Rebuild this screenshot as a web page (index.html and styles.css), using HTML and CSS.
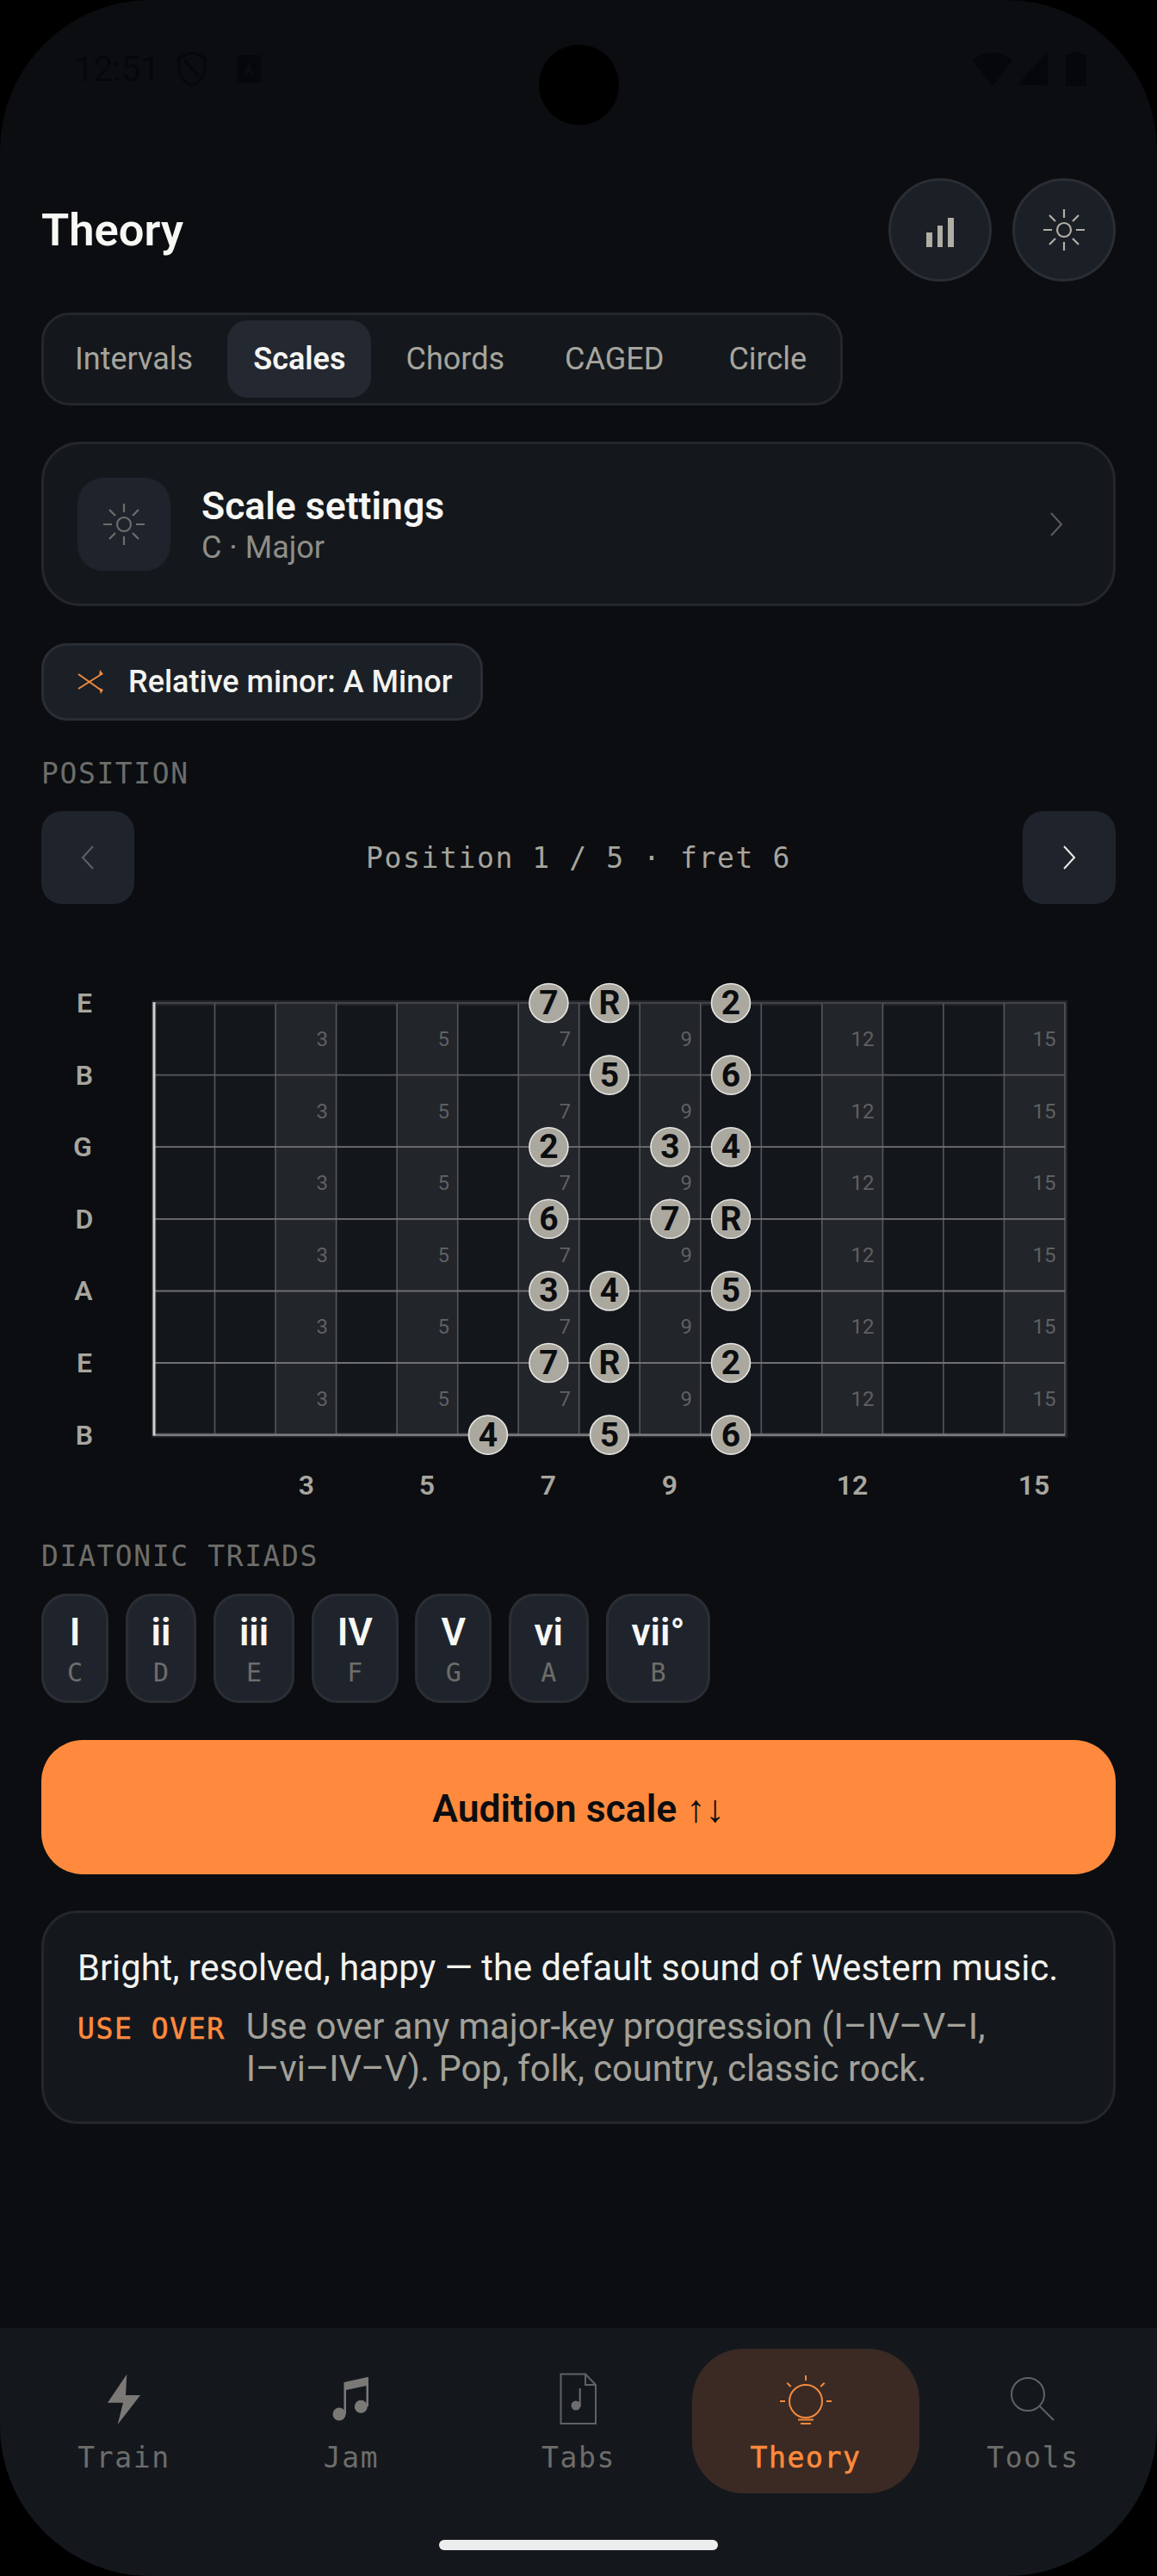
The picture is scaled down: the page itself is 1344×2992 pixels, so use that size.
FILE: index.html
```html
<!DOCTYPE html>
<html lang="en">
<head>
<meta charset="utf-8">
<title>Theory</title>
<link rel="stylesheet" href="styles.css">
</head>
<body>
<div class="screen">
  <div class="camera"></div>
  <div class="status">
    <div class="status-left">
      <span class="time">12:51</span>
      <svg class="st-shield" width="34" height="42" viewBox="0 0 34 42"><path d="M17 2 L32 8 V21 C32 30 25 37 17 40 C9 37 2 30 2 21 V8 Z M9 10 C9 18 24 22 24 30" fill="none" stroke="#06070a" stroke-width="3"/></svg>
      <svg class="st-a" width="28" height="32" viewBox="0 0 28 32"><path fill-rule="evenodd" d="M0 0H28V32H0Z M14 8 L8 24H12L14 19L16 24H20Z" fill="#06070a"/></svg>
    </div>
    <div class="status-right">
      <svg width="46" height="40" viewBox="0 0 46 40"><path d="M0 10 Q23 -8 46 10 L23 40 Z" fill="#06070a"/></svg>
      <svg width="36" height="38" viewBox="0 0 36 38"><path d="M36 0V38H0Z" fill="#06070a"/></svg>
      <svg class="st-batt" width="24" height="40" viewBox="0 0 24 40"><path d="M7 0H17V3H24V40H0V3H7Z" fill="#06070a"/></svg>
    </div>
  </div>

  <main class="content">
    <header class="head">
      <h1 class="title">Theory</h1>
      <div class="head-btns">
        <button class="round">
          <svg width="40" height="40" viewBox="0 0 40 40"><path d="M4 23h7v17H4z M17 15h6v25h-6z M29 6h7v34h-7z" fill="#b0aea5"/></svg>
        </button>
        <button class="round">
          <svg width="52" height="52" viewBox="-26 -26 52 52" class="sun"><circle r="8"/><path d="M0-24V-14M0 14V24M-24 0H-14M14 0H24M-17-17L-10-10M10 10L17 17M-17 17L-10 10M10-10L17-17"/></svg>
        </button>
      </div>
    </header>

    <nav class="tabs">
      <span class="tab">Intervals</span>
      <span class="tab active">Scales</span>
      <span class="tab">Chords</span>
      <span class="tab">CAGED</span>
      <span class="tab">Circle</span>
    </nav>

    <section class="settings">
      <div class="tile">
        <svg width="52" height="52" viewBox="-26 -26 52 52" class="sun dim"><circle r="8"/><path d="M0-24V-14M0 14V24M-24 0H-14M14 0H24M-17-17L-10-10M10 10L17 17M-17 17L-10 10M10-10L17-17"/></svg>
      </div>
      <div class="settings-text">
        <div class="settings-title">Scale settings</div>
        <div class="settings-sub">C · Major</div>
      </div>
      <svg class="chev-end" width="16" height="30" viewBox="0 0 16 30"><path d="M2 2L14 15L2 28" fill="none" stroke="#5a5c5e" stroke-width="2"/></svg>
    </section>

    <div class="chip">
      <svg width="32" height="28" viewBox="0 0 32 28"><path d="M1 5L28 24M1 22L28 5" fill="none" stroke="#f08a3e" stroke-width="2"/><path d="M26 0L30 5L25 7Z M25 21L30 23L27 28Z" fill="#f08a3e"/></svg>
      <span>Relative minor: A Minor</span>
    </div>

    <div class="label pos-label">POSITION</div>
    <div class="pos-row">
      <button class="square"><svg width="18" height="30" viewBox="0 0 18 30"><path d="M15 2L3 15L15 28" fill="none" stroke="#5d6064" stroke-width="2"/></svg></button>
      <span class="pos-text">Position 1 / 5 · fret 6</span>
      <button class="square"><svg width="18" height="30" viewBox="0 0 18 30"><path d="M3 2L15 15L3 28" fill="none" stroke="#ecece8" stroke-width="2"/></svg></button>
    </div>

    <svg class="board" width="1248" height="630" viewBox="48 1120 1248 630">
      <rect class="b-edge" x="179" y="1165" width="1058" height="501.6"/>
      <rect class="b-mark" x="320.1" y="1165" width="70.5" height="501.6"/>
      <rect class="b-mark" x="461.1" y="1165" width="70.6" height="501.6"/>
      <rect class="b-mark" x="602.2" y="1165" width="70.5" height="501.6"/>
      <rect class="b-mark" x="743.2" y="1165" width="70.6" height="501.6"/>
      <rect class="b-mark" x="954.8" y="1165" width="70.6" height="501.6"/>
      <rect class="b-mark" x="1166.4" y="1165" width="70.6" height="501.6"/>

      <path class="fret" d="M249.5 1165V1666.6M320.1 1165V1666.6M390.6 1165V1666.6M461.1 1165V1666.6M531.7 1165V1666.6M602.2 1165V1666.6M672.7 1165V1666.6M743.2 1165V1666.6M813.8 1165V1666.6M884.3 1165V1666.6M954.8 1165V1666.6M1025.4 1165V1666.6M1095.9 1165V1666.6M1166.4 1165V1666.6M1237 1165V1666.6"/>
      <path class="str s1" d="M179 1165H1237"/>
      <path class="str s2" d="M179 1248.6H1237"/>
      <path class="str s3" d="M179 1332.2H1237"/>
      <path class="str s3" d="M179 1415.8H1237"/>
      <path class="str s4" d="M179 1499.4H1237"/>
      <path class="str s4" d="M179 1583H1237"/>
      <path class="str s5" d="M179 1666.6H1237"/>
      <path class="nut" d="M179 1164V1667.5"/>

      <g class="inlay">
        <text x="381" y="1207">3</text><text x="381" y="1291">3</text><text x="381" y="1374">3</text><text x="381" y="1458">3</text><text x="381" y="1541">3</text><text x="381" y="1625">3</text>
        <text x="522" y="1207">5</text><text x="522" y="1291">5</text><text x="522" y="1374">5</text><text x="522" y="1458">5</text><text x="522" y="1541">5</text><text x="522" y="1625">5</text>
        <text x="663" y="1207">7</text><text x="663" y="1291">7</text><text x="663" y="1374">7</text><text x="663" y="1458">7</text><text x="663" y="1541">7</text><text x="663" y="1625">7</text>
        <text x="804" y="1207">9</text><text x="804" y="1291">9</text><text x="804" y="1374">9</text><text x="804" y="1458">9</text><text x="804" y="1541">9</text><text x="804" y="1625">9</text>
        <text x="1015.5" y="1207">12</text><text x="1015.5" y="1291">12</text><text x="1015.5" y="1374">12</text><text x="1015.5" y="1458">12</text><text x="1015.5" y="1541">12</text><text x="1015.5" y="1625">12</text>
        <text x="1226.5" y="1207">15</text><text x="1226.5" y="1291">15</text><text x="1226.5" y="1374">15</text><text x="1226.5" y="1458">15</text><text x="1226.5" y="1541">15</text><text x="1226.5" y="1625">15</text>
      </g>

      <g class="strname">
        <text x="98" y="1165">E</text><text x="98" y="1249">B</text><text x="96" y="1332">G</text><text x="98" y="1416">D</text><text x="97" y="1499">A</text><text x="98" y="1583">E</text><text x="98" y="1667">B</text>
      </g>

      <g class="fretnum">
        <text x="356" y="1725">3</text><text x="496" y="1725">5</text><text x="637" y="1725">7</text><text x="778" y="1725">9</text><text x="990" y="1725">12</text><text x="1201" y="1725">15</text>
      </g>

      <g class="note">
        <circle cx="637.4" cy="1165" r="22.5"/><text x="637.4" y="1165">7</text>
        <circle cx="708" cy="1165" r="22.5"/><text x="708" y="1165">R</text>
        <circle cx="849" cy="1165" r="22.5"/><text x="849" y="1165">2</text>
        <circle cx="708" cy="1248.6" r="22.5"/><text x="708" y="1248.6">5</text>
        <circle cx="849" cy="1248.6" r="22.5"/><text x="849" y="1248.6">6</text>
        <circle cx="637.4" cy="1332.2" r="22.5"/><text x="637.4" y="1332.2">2</text>
        <circle cx="778.5" cy="1332.2" r="22.5"/><text x="778.5" y="1332.2">3</text>
        <circle cx="849" cy="1332.2" r="22.5"/><text x="849" y="1332.2">4</text>
        <circle cx="637.4" cy="1415.8" r="22.5"/><text x="637.4" y="1415.8">6</text>
        <circle cx="778.5" cy="1415.8" r="22.5"/><text x="778.5" y="1415.8">7</text>
        <circle cx="849" cy="1415.8" r="22.5"/><text x="849" y="1415.8">R</text>
        <circle cx="637.4" cy="1499.4" r="22.5"/><text x="637.4" y="1499.4">3</text>
        <circle cx="708" cy="1499.4" r="22.5"/><text x="708" y="1499.4">4</text>
        <circle cx="849" cy="1499.4" r="22.5"/><text x="849" y="1499.4">5</text>
        <circle cx="637.4" cy="1583" r="22.5"/><text x="637.4" y="1583">7</text>
        <circle cx="708" cy="1583" r="22.5"/><text x="708" y="1583">R</text>
        <circle cx="849" cy="1583" r="22.5"/><text x="849" y="1583">2</text>
        <circle cx="566.9" cy="1666.6" r="22.5"/><text x="566.9" y="1666.6">4</text>
        <circle cx="708" cy="1666.6" r="22.5"/><text x="708" y="1666.6">5</text>
        <circle cx="849" cy="1666.6" r="22.5"/><text x="849" y="1666.6">6</text>
      </g>
    </svg>

    <div class="label triad-label">DIATONIC TRIADS</div>
    <div class="triads">
      <div class="triad"><b>I</b><span>C</span></div>
      <div class="triad"><b>ii</b><span>D</span></div>
      <div class="triad"><b>iii</b><span>E</span></div>
      <div class="triad"><b>IV</b><span>F</span></div>
      <div class="triad"><b>V</b><span>G</span></div>
      <div class="triad"><b>vi</b><span>A</span></div>
      <div class="triad"><b>vii°</b><span>B</span></div>
    </div>

    <button class="audition">Audition scale ↑↓</button>

    <section class="info">
      <p class="info-main">Bright, resolved, happy — the default sound of Western music.</p>
      <div class="info-row">
        <span class="use-over">USE OVER</span>
        <p class="info-sub">Use over any major-key progression (I–IV–V–I,<br>I–vi–IV–V). Pop, folk, country, classic rock.</p>
      </div>
    </section>
  </main>

  <footer class="bottom">
    <div class="items">
      <div class="item">
        <svg width="80" height="72" viewBox="104 2750 80 72"><path d="M147.3 2757.7L125 2790.7H143L136.7 2816L163 2782H146Z" fill="#7a7976"/></svg>
        <span>Train</span>
      </div>
      <div class="item">
        <svg width="80" height="72" viewBox="368 2750 80 72"><circle cx="394" cy="2804" r="7.5" fill="#7a7976"/><circle cx="419.3" cy="2795.3" r="7.5" fill="#7a7976"/><path d="M399.5 2804V2767L428 2760.7V2795H425.5V2771L402 2776V2804Z" fill="#7a7976"/></svg>
        <span>Jam</span>
      </div>
      <div class="item">
        <svg width="80" height="72" viewBox="632 2750 80 72"><path d="M651.5 2757.5H680L692 2770V2815H651.5Z M680 2757.5V2770H692" fill="none" stroke="#5f6265" stroke-width="2"/><path d="M673.7 2774V2795" stroke="#6c6d6c" stroke-width="2"/><circle cx="669" cy="2794" r="5.5" fill="#6c6d6c"/></svg>
        <span>Tabs</span>
      </div>
      <div class="item active">
        <svg width="80" height="72" viewBox="896 2750 80 72"><g fill="none" stroke="#f38a3e" stroke-width="2"><circle cx="936" cy="2789" r="19"/><path d="M936 2759V2765M914.3 2767.7L918.7 2772M957.7 2767.7L953.3 2772M906 2789H912M960 2789H966M927 2810.5H945M930 2815H942"/></g></svg>
        <span>Theory</span>
      </div>
      <div class="item">
        <svg width="80" height="72" viewBox="1160 2750 80 72"><circle cx="1194" cy="2781" r="19" fill="none" stroke="#5f6265" stroke-width="2"/><path d="M1208 2795L1224 2811" stroke="#5f6265" stroke-width="2"/></svg>
        <span>Tools</span>
      </div>
    </div>
    <div class="homebar"></div>
  </footer>
</div>
</body>
</html>
```

FILE: styles.css
```css
* { box-sizing: border-box; }
html, body { margin: 0; padding: 0; background: #000; }
body { width: 1344px; height: 2992px; overflow: hidden; font-family: Roboto, "Noto Sans", sans-serif; }
p, h1 { margin: 0; }
button { font: inherit; padding: 0; cursor: pointer; }

.screen {
  position: relative;
  width: 1344px;
  height: 2992px;
  background: #0b0d11;
  border-radius: 175px;
  overflow: hidden;
  display: flex;
  flex-direction: column;
}
.camera {
  position: absolute;
  left: 626px;
  top: 52px;
  width: 93px;
  height: 93px;
  border-radius: 50%;
  background: #000;
}
.status {
  height: 207px;
  flex: none;
  padding: 56px 82px 0 86px;
  display: flex;
  justify-content: space-between;
  align-items: flex-start;
  color: #06070a;
}
.status-left { display: flex; align-items: center; gap: 20px; height: 48px; }
.time { font-size: 41px; line-height: 48px; letter-spacing: -0.5px; }
.st-a { margin-left: 15px; }
.status-right { display: flex; align-items: center; gap: 5px; height: 48px; }
.st-batt { margin-left: 16px; }

.content { flex: 1; padding: 0 48px; display: flex; flex-direction: column; align-items: flex-start; }

.head { width: 100%; height: 120px; display: flex; justify-content: space-between; align-items: center; flex: none; }
.title { font-size: 52.5px; font-weight: 600; color: #f7f7f4; line-height: 64px; }
.head-btns { display: flex; gap: 24px; }
.round {
  width: 120px; height: 120px; border-radius: 50%;
  background: #1b1f26; border: 3px solid #2a2e34;
  display: flex; align-items: center; justify-content: center;
}
.sun { fill: none; stroke: #b0aea5; stroke-width: 2.2; }
.sun.dim { stroke: #6d6e6c; }

.tabs {
  margin-top: 36px;
  height: 108px;
  padding: 6px 9px 6px 6px;
  display: flex;
  gap: 10px;
  flex: none;
  background: #14181d;
  border: 3px solid #23272c;
  border-radius: 33px;
}
.tab {
  padding: 0 30px;
  height: 90px;
  line-height: 90px;
  font-size: 36px;
  color: #a7a59d;
  border-radius: 24px;
}
.tab:last-child { margin-left: 5px; }
.tab.active { background: #232831; color: #f5f5f2; font-weight: 600; }

.settings {
  margin-top: 42px;
  width: 100%;
  height: 191px;
  flex: none;
  padding: 0 42px;
  display: flex;
  align-items: center;
  background: #14181d;
  border: 3px solid #23272c;
  border-radius: 45px;
}
.tile {
  width: 108px; height: 108px; border-radius: 30px;
  background: #1f242c;
  display: flex; align-items: center; justify-content: center;
  flex: none;
  margin-left: -3px;
}
.settings-text { margin-left: 36px; flex: 1; }
.settings-title { font-size: 44.5px; font-weight: 600; line-height: 54px; color: #f7f7f4; }
.settings-sub { font-size: 36px; line-height: 42px; color: #8f8e87; }
.chev-end { margin-right: 16px; }

.chip {
  margin-top: 43px;
  height: 90px;
  flex: none;
  padding: 0 33px 0 39px;
  display: flex;
  align-items: center;
  gap: 27px;
  background: #1b1f26;
  border: 3px solid #2a2e34;
  border-radius: 30px;
  font-size: 36px;
  font-weight: 500;
  color: #f3f3ef;
}

.label {
  font-family: "DejaVu Sans Mono", monospace;
  font-size: 33px;
  line-height: 40px;
  letter-spacing: 1.6px;
  color: #6d6d6a;
  flex: none;
}
.pos-label { margin-top: 42px; }
.pos-row {
  margin-top: 23px;
  width: 100%;
  height: 108px;
  flex: none;
  display: flex;
  align-items: center;
  justify-content: space-between;
}
.square {
  width: 108px; height: 108px; border: 0; border-radius: 24px;
  background: #1f242c;
  display: flex; align-items: center; justify-content: center;
}
.pos-text {
  font-family: "DejaVu Sans Mono", monospace;
  font-size: 33px;
  letter-spacing: 1.6px;
  color: #a7a59d;
}

.board { display: block; flex: none; margin-top: 70px; }
.b-edge { fill: #13171c; stroke: #22252a; stroke-width: 6; }
.b-mark { fill: #222529; }
.fret { fill: none; stroke: #55575a; stroke-width: 1.6; }
.str { fill: none; }
.s1 { stroke: #4c4e51; stroke-width: 1.4; }
.s2 { stroke: #5a5c5e; stroke-width: 1.6; }
.s3 { stroke: #707173; stroke-width: 1.8; }
.s4 { stroke: #6f7072; stroke-width: 2; }
.s5 { stroke: #78797a; stroke-width: 2.6; }
.nut { stroke: #d0d0cc; stroke-width: 3; fill: none; }

.inlay text {
  font-family: Roboto, sans-serif;
  font-size: 24px;
  fill: #5f6062;
  text-anchor: end;
  dominant-baseline: central;
}
.strname text {
  font-family: Roboto, sans-serif;
  font-size: 32px;
  font-weight: 600;
  fill: #a8a69e;
  text-anchor: middle;
  dominant-baseline: central;
}
.fretnum text {
  font-family: Roboto, sans-serif;
  font-size: 32px;
  font-weight: 600;
  fill: #a8a69e;
  text-anchor: middle;
  dominant-baseline: central;
}
.note circle { fill: #aba89f; stroke: #e6e6e1; stroke-width: 1.6; }
.note text {
  font-family: Roboto, sans-serif;
  font-size: 39px;
  font-weight: 700;
  fill: #0b0d10;
  text-anchor: middle;
  dominant-baseline: central;
}

.triad-label { margin-top: 38px; }
.triads { margin-top: 23px; display: flex; gap: 19.5px; flex: none; }
.triad {
  height: 127px;
  padding: 0 27px;
  display: flex;
  flex-direction: column;
  align-items: center;
  background: #1f242c;
  border: 3px solid #2a2e34;
  border-radius: 30px;
}
.triad b { font-size: 44px; font-weight: 600; line-height: 52px; margin-top: 16px; color: #f7f7f4; }
.triad span {
  font-family: "DejaVu Sans Mono", monospace;
  font-size: 30px;
  line-height: 38px;
  margin-top: 2px;
  color: #6d6d6a;
}

.audition {
  margin-top: 43px;
  width: 100%;
  height: 156px;
  flex: none;
  border: 0;
  border-radius: 48px;
  padding-top: 3px;
  background: #ff8a3d;
  color: #0b0d10;
  font-size: 44.5px;
  font-weight: 600;
}

.info {
  margin-top: 42px;
  width: 100%;
  height: 248px;
  flex: none;
  padding: 40px 39px 0;
  background: #14181d;
  border: 3px solid #23272c;
  border-radius: 42px;
}
.info-main { font-size: 41.7px; line-height: 48px; color: #f3f3ef; white-space: nowrap; }
.info-row { margin-top: 19px; display: flex; gap: 24px; align-items: baseline; }
.use-over {
  font-family: "DejaVu Sans Mono", monospace;
  font-size: 33px;
  -webkit-text-stroke: 0.6px #ff8a3d;
  letter-spacing: 1.6px;
  color: #ff8a3d;
  white-space: nowrap;
}
.info-sub { font-size: 41.7px; line-height: 49px; color: #a3a199; white-space: nowrap; }

.bottom {
  flex: none;
  height: 288px;
  padding: 24px 12px 0;
  background: #14181d;
  display: flex;
  flex-direction: column;
}
.items { display: grid; grid-template-columns: repeat(5, 264px); }
.item {
  height: 168px;
  padding-top: 22px;
  display: flex;
  flex-direction: column;
  align-items: center;
  border-radius: 60px;
  font-family: "DejaVu Sans Mono", monospace;
  font-size: 33px;
  letter-spacing: 1.6px;
  color: #6d6d6a;
}
.item span { margin-top: 11px; line-height: 44px; }
.item.active { background: #3a2a23; color: #ff8a3d; -webkit-text-stroke: 0.6px #ff8a3d; }
.homebar {
  margin-top: 54px;
  align-self: center;
  width: 324px;
  height: 12px;
  border-radius: 6px;
  background: #eceeee;
}
```
